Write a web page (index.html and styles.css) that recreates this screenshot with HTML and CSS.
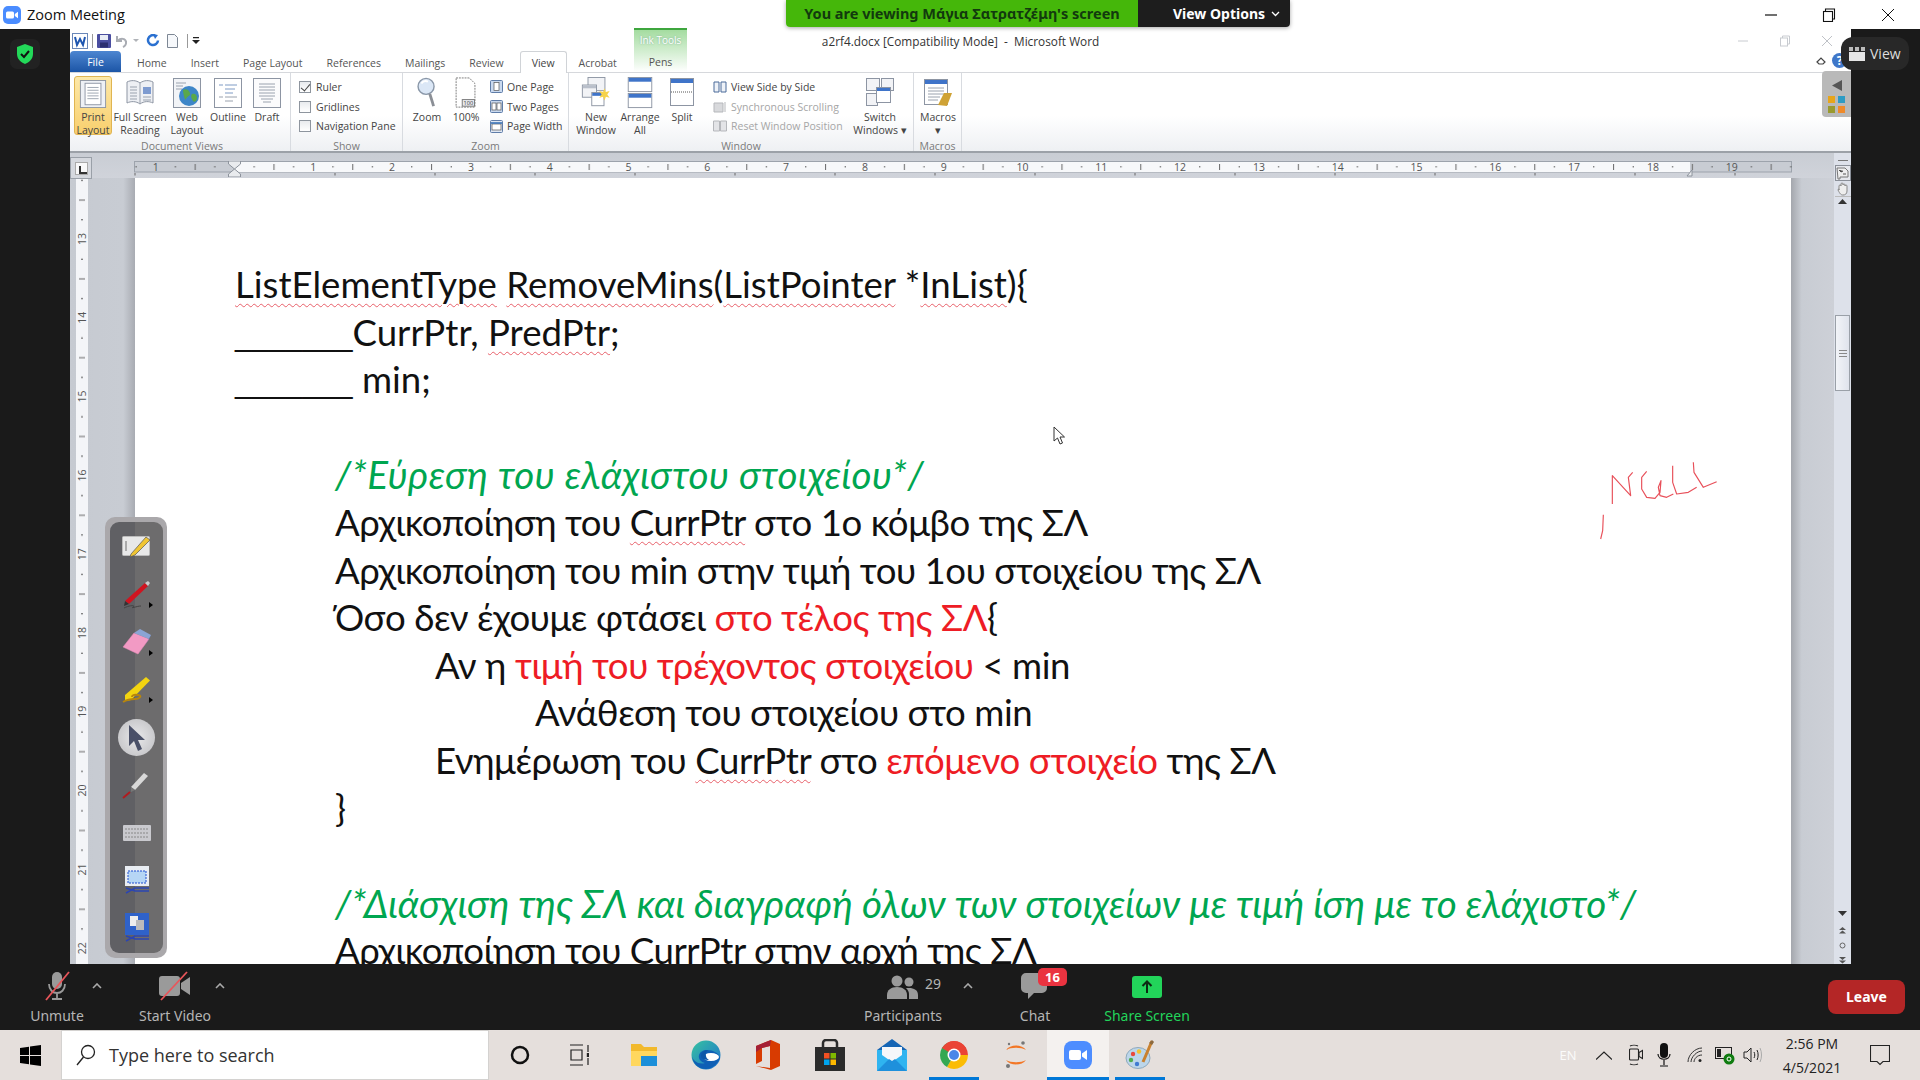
FILE: index.html
```html
<!DOCTYPE html>
<html lang="en">
<head>
<meta charset="utf-8">
<title>Zoom Meeting</title>
<link rel="stylesheet" href="styles.css">
</head>
<body>
<div class="screen">
  <header class="titlebar">
    <svg class="zlogo" viewBox="0 0 18 18"><rect width="18" height="18" rx="5" fill="#4a8cff"/><rect x="3" y="5.5" width="8" height="7" rx="1.5" fill="#fff"/><path d="M11.8 8l3.2-2.2v6.4L11.8 10z" fill="#fff"/></svg>
    <span class="app-title">Zoom Meeting</span>
    <div class="winctrls">
      <span class="winbtn"><svg width="14" height="14" viewBox="0 0 14 14"><path d="M1 7h12" stroke="#111" stroke-width="1.2"/></svg></span>
      <span class="winbtn"><svg width="14" height="14" viewBox="0 0 14 14" fill="none" stroke="#111" stroke-width="1.1"><rect x="1.5" y="3.5" width="9" height="10"/><path d="M3.5 3.5V1h9v10h-2"/></svg></span>
      <span class="winbtn"><svg width="14" height="14" viewBox="0 0 14 14"><path d="M1 1l12 12M13 1L1 13" stroke="#111" stroke-width="1"/></svg></span>
    </div>
  </header>

  <div class="main">
    <aside class="side-left">
      <div class="shield-box">
        <svg width="16" height="20" viewBox="0 0 16 20"><path d="M8 0l8 3v7c0 5-4 8.500-8 10-4-1.500-8-5-8-10V3z" fill="#23d959"/><path d="M4 10l3 3 5-6" fill="none" stroke="#111" stroke-width="2"/></svg>
      </div>
    </aside>

    <div class="word">
      <div class="w-top">
        <div class="qat">
          <svg class="q-w" width="16" height="16" viewBox="0 0 16 16"><rect x=".5" y=".5" width="15" height="15" fill="#fff" stroke="#6a87b8"/><path d="M3 4l2 8 3-6 3 6 2-8" fill="none" stroke="#1f56b0" stroke-width="2"/></svg>
          <i class="q-sep"></i>
          <svg width="14" height="14" viewBox="0 0 14 14"><rect width="14" height="14" rx="1" fill="#4a4ea0"/><rect x="3" y="1" width="8" height="5" fill="#e8ecf5"/><rect x="3" y="8.500" width="8" height="5" fill="#2c2f70"/></svg>
          <svg width="14" height="14" viewBox="0 0 14 14"><path d="M2 2v5h5M2.500 7c3-3 8-3 8.500 1 .3 2-1 4-3 5" fill="none" stroke="#a9acb3" stroke-width="2"/></svg>
          <svg width="6" height="4" viewBox="0 0 6 4"><path d="M0 0h6L3 3z" fill="#b0b3b8"/></svg>
          <svg class="q-redo" width="14" height="14" viewBox="0 0 14 14"><path d="M9 1.500a5 5 0 1 0 3 5" fill="none" stroke="#2a70d0" stroke-width="2.500"/><path d="M7 0l5 1-3 4z" fill="#2a70d0"/></svg>
          <svg class="q-new" width="11" height="14" viewBox="0 0 11 14"><path d="M.5.5h7l3 3v10H.5z" fill="#f6f8fb" stroke="#7d8794"/></svg>
          <i class="q-sep q-sep2"></i>
          <svg width="8" height="9" viewBox="0 0 8 9"><path d="M1 1h6v1.200H1zM0 4h8L4 8z" fill="#222"/></svg>
        </div>
        <div class="doc-title">a2rf4.docx [Compatibility Mode]&nbsp; -&nbsp; Microsoft Word</div>
        <div class="w-ctrls">
          <svg width="12" height="12" viewBox="0 0 12 12"><path d="M1 6h10" stroke="#c8cbd0"/></svg>
          <svg width="12" height="12" viewBox="0 0 12 12" fill="none" stroke="#c8cbd0"><rect x="1.500" y="3" width="7" height="8"/><path d="M3.500 3V1h7v8H8.500"/></svg>
          <svg width="12" height="12" viewBox="0 0 12 12"><path d="M1 1l10 10M11 1L1 11" stroke="#bfc2c7"/></svg>
        </div>
      </div>
      <nav class="tabs">
        <span class="tab-file">File</span>
        <span class="tab t-home">Home</span>
        <span class="tab">Insert</span>
        <span class="tab">Page Layout</span>
        <span class="tab">References</span>
        <span class="tab">Mailings</span>
        <span class="tab">Review</span>
        <span class="tab tab-on">View</span>
        <span class="tab t-acro">Acrobat</span>
        <span class="tab-ink"><b>Ink Tools</b><span>Pens</span></span>
        <span class="tab-right">
          <svg width="10" height="9" viewBox="0 0 10 9"><path d="M1 6l4-4 4 4-2 2H3z" fill="none" stroke="#444" stroke-width="1.200"/></svg>
          <svg width="15" height="15" viewBox="0 0 15 15"><circle cx="7.500" cy="7.500" r="7.500" fill="#3f77c9"/><text x="7.500" y="11.500" class="help-q">?</text></svg>
        </span>
      </nav>

      <section class="ribbon">
        <div class="group g-views">
          <div class="g-body">
            <div class="rb rb-print rb-on">
              <svg width="28" height="30" viewBox="0 0 28 30"><rect x=".5" y=".5" width="27" height="29" fill="#eef1f6" stroke="#8d95a3"/><rect x="5.500" y="3.500" width="17" height="23" fill="#fff" stroke="#8d95a3"/><path d="M8 8h12M8 11h12M8 14h12M8 17h12M8 20h12" stroke="#9aa2ae"/></svg>
              <span>Print<br>Layout</span>
            </div>
            <div class="rb rb-full">
              <svg width="28" height="30" viewBox="0 0 28 30"><path d="M1 4c4-2 9-2 13 1 4-3 9-3 13-1v21c-4-2-9-2-13 1-4-3-9-3-13-1z" fill="#eef0f4" stroke="#8d95a3"/><path d="M14 5v21M4 9h7M4 12h7M4 15h7M4 18h7M4 21h7" stroke="#9aa2ae"/><rect x="17" y="9" width="8" height="7" fill="#7e9bd0"/><path d="M17 19h8M17 22h8" stroke="#9aa2ae"/></svg>
              <span>Full Screen<br>Reading</span>
            </div>
            <div class="rb rb-web">
              <svg width="28" height="30" viewBox="0 0 28 30"><rect x=".5" y=".5" width="27" height="29" fill="#f2f4f7" stroke="#8d95a3"/><path d="M3 5h10M3 8h7M3 11h6" stroke="#9aa2ae"/><circle cx="16" cy="18" r="10" fill="#3d86c8"/><path d="M10 12c3-2 6 0 7 3s-3 3-4 6-3-6-3-9zM19 16c3-1 5 1 5 4s-3 5-4 3-3-5-1-7z" fill="#5aa84a"/></svg>
              <span>Web<br>Layout</span>
            </div>
            <div class="rb rb-outline">
              <svg width="28" height="30" viewBox="0 0 28 30"><rect x=".5" y=".5" width="27" height="29" fill="#fff" stroke="#8d95a3"/><path d="M5 7h4M11 7h12M11 11h10M11 15h8" stroke="#7f9bc5"/><path d="M5 19h4M11 19h12M11 23h8" stroke="#9aa2ae"/></svg>
              <span>Outline</span>
            </div>
            <div class="rb rb-draft">
              <svg width="28" height="30" viewBox="0 0 28 30"><rect x=".5" y=".5" width="27" height="29" fill="#fbfbfc" stroke="#8d95a3"/><path d="M6 6h16M6 9h16M6 12h16M6 15h16M6 18h16M8 21h12M10 24h8" stroke="#9aa2ae"/></svg>
              <span>Draft</span>
            </div>
          </div>
          <div class="g-label">Document Views</div>
        </div>

        <div class="group g-show">
          <div class="g-body">
            <div class="list l-show">
              <div class="li"><i class="chk chk-on"></i><span>Ruler</span></div>
              <div class="li"><i class="chk"></i><span>Gridlines</span></div>
              <div class="li"><i class="chk"></i><span>Navigation Pane</span></div>
            </div>
          </div>
          <div class="g-label">Show</div>
        </div>

        <div class="group g-zoom">
          <div class="g-body">
            <div class="rb rb-zoom">
              <svg width="22" height="34" viewBox="0 0 22 34"><circle cx="10" cy="10" r="8.500" fill="#dbe7f6" stroke="#8a97a8" stroke-width="1.500"/><path d="M5 7c2-3 5-3 7-2" stroke="#fff" stroke-width="2" fill="none"/><path d="M14 18l4 13" stroke="#8b8f96" stroke-width="3"/></svg>
              <span>Zoom</span>
            </div>
            <div class="rb rb-100">
              <svg width="24" height="34" viewBox="0 0 24 34"><path d="M1.500 1h14l6 6v25h-20z" fill="#fff" stroke="#777" stroke-dasharray="2 1"/><rect x="8" y="24" width="13" height="7" fill="#e8eaee" stroke="#777"/><text x="14.500" y="30" class="mini">100</text></svg>
              <span>100%</span>
            </div>
            <div class="list l-zoom">
              <div class="li"><svg class="lic" width="13" height="13" viewBox="0 0 13 13"><rect x=".5" y=".5" width="12" height="12" rx="1" fill="#c9d9ef" stroke="#5f7da8"/><rect x="4" y="2.500" width="5" height="8" fill="#fff" stroke="#555" stroke-width=".7"/></svg><span>One Page</span></div>
              <div class="li"><svg class="lic" width="13" height="13" viewBox="0 0 13 13"><rect x=".5" y=".5" width="12" height="12" rx="1" fill="#c9d9ef" stroke="#5f7da8"/><rect x="2" y="3" width="4" height="7" fill="#fff" stroke="#555" stroke-width=".7"/><rect x="7" y="3" width="4" height="7" fill="#fff" stroke="#555" stroke-width=".7"/></svg><span>Two Pages</span></div>
              <div class="li"><svg class="lic" width="13" height="13" viewBox="0 0 13 13"><rect x=".5" y=".5" width="12" height="12" rx="1" fill="#dfe7f3" stroke="#5f7da8"/><rect x="2" y="4" width="9" height="6" fill="#fff" stroke="#555" stroke-width=".7"/><path d="M1 3h11" stroke="#2f6db5" stroke-width="1.500"/></svg><span>Page Width</span></div>
            </div>
          </div>
          <div class="g-label">Zoom</div>
        </div>

        <div class="group g-window">
          <div class="g-body">
            <div class="rb rb-new">
              <svg width="30" height="34" viewBox="0 0 30 34"><rect x="6.500" y=".5" width="18" height="14" fill="#f2f3f6" stroke="#8d95a3"/><rect x=".5" y="8.500" width="15" height="13" fill="#f2f3f6" stroke="#8d95a3"/><rect x="1" y="9" width="14" height="3" fill="#b9bfca"/><rect x="10.500" y="16.500" width="13" height="14" fill="#fff" stroke="#8d95a3"/><rect x="11" y="17" width="12" height="3" fill="#3f74c9"/><path d="M24 12l1.500 4 4-1-2.500 3.500 2.500 3.500-4-1-1.500 4-1.500-4-4 1 2.500-3.500-2.500-3.500 4 1z" fill="#f6d34b"/></svg>
              <span>New<br>Window</span>
            </div>
            <div class="rb rb-arr">
              <svg width="26" height="34" viewBox="0 0 26 34"><rect x=".5" y=".5" width="25" height="15" fill="#fff" stroke="#8d95a3"/><rect x="1" y="1" width="24" height="4" fill="#3f74c9"/><rect x=".5" y="17.500" width="25" height="15" fill="#fff" stroke="#8d95a3"/><rect x="1" y="18" width="24" height="4" fill="#3f74c9"/></svg>
              <span>Arrange<br>All</span>
            </div>
            <div class="rb rb-split">
              <svg width="24" height="30" viewBox="0 0 24 30"><rect x=".5" y=".5" width="23" height="27" fill="#fff" stroke="#8d95a3"/><rect x="1" y="1" width="22" height="4" fill="#3f74c9"/><path d="M1 14h22" stroke="#555" stroke-dasharray="1 1"/></svg>
              <span>Split</span>
            </div>
            <div class="list l-win">
              <div class="li"><svg class="lic" width="14" height="12" viewBox="0 0 14 12"><path d="M1 1h5v10H1zM8 1h5v10H8z" fill="#eef2f8" stroke="#4a6a9a"/></svg><span>View Side by Side</span></div>
              <div class="li li-off"><svg class="lic" width="14" height="12" viewBox="0 0 14 12"><path d="M1 2h9v9H1z" fill="#d8d9dc" stroke="#b5b7bb"/><path d="M12 1v10" stroke="#b5b7bb"/></svg><span>Synchronous Scrolling</span></div>
              <div class="li li-off"><svg class="lic" width="14" height="12" viewBox="0 0 14 12"><path d="M.5 1h6v10h-6zM7.500 1h6v10h-6z" fill="#e3e4e7" stroke="#b5b7bb"/></svg><span>Reset Window Position</span></div>
            </div>
            <div class="rb rb-switch">
              <svg width="28" height="30" viewBox="0 0 28 30"><rect x=".5" y=".5" width="13" height="12" fill="#f2f3f6" stroke="#8d95a3"/><rect x="15.500" y=".5" width="12" height="12" fill="#f2f3f6" stroke="#8d95a3"/><rect x=".5" y="15.500" width="11" height="12" fill="#f2f3f6" stroke="#8d95a3"/><rect x="10.500" y="9.500" width="14" height="15" fill="#fff" stroke="#8d95a3"/><rect x="11" y="10" width="13" height="3" fill="#3f74c9"/></svg>
              <span>Switch<br>Windows ▾</span>
            </div>
          </div>
          <div class="g-label">Window</div>
        </div>

        <div class="group g-macros">
          <div class="g-body">
            <div class="rb rb-mac">
              <svg width="28" height="30" viewBox="0 0 28 30"><rect x=".5" y="1.500" width="23" height="25" fill="#fff" stroke="#8d95a3"/><rect x="1" y="2" width="22" height="4" fill="#3f74c9"/><path d="M4 10h16M4 13h16M4 16h16M4 19h12M4 22h10" stroke="#9aa2ae"/><path d="M14 27l6-12h8l-5 13z" fill="#cfa235"/></svg>
              <span>Macros<br>▾</span>
            </div>
          </div>
          <div class="g-label">Macros</div>
        </div>
      </section>

      <div class="w-body">
        <div class="w-left">
          <div class="ruler-row">
            <div class="tab-stop"><i></i></div>
            <svg class="h-ruler" width="1658" height="16" viewBox="0 0 1658 16">
              <defs>
                <pattern id="ht" width="78.800" height="16" x="100.500" patternUnits="userSpaceOnUse">
                  <rect x="19.200" y="5" width="1" height="1.500" fill="#555"/>
                  <rect x="39" y="3" width="1" height="6" fill="#666"/>
                  <rect x="58.600" y="5" width="1" height="1.500" fill="#555"/>
                </pattern>
                <pattern id="hs" width="100" height="16" x="200.500" patternUnits="userSpaceOnUse">
                  <rect x="0" y="12" width="1" height="2.500" fill="#666"/>
                </pattern>
              </defs>
              <rect x=".5" y=".5" width="1657" height="10.500" fill="#c8ccd3" stroke="#9da3ac"/>
              <rect x="100.500" y="1" width="1455.500" height="10" fill="#f7f8fa"/>
              <rect width="1658" height="11" fill="url(#ht)"/>
              <rect width="1658" height="16" fill="url(#hs)"/>
              <g class="rtext">
                <text x="21.700" y="9.500">1</text><text x="179.300" y="9.500">1</text><text x="258.100" y="9.500">2</text><text x="336.900" y="9.500">3</text><text x="415.700" y="9.500">4</text><text x="494.500" y="9.500">5</text><text x="573.300" y="9.500">6</text><text x="652.100" y="9.500">7</text><text x="730.900" y="9.500">8</text><text x="809.700" y="9.500">9</text><text x="888.500" y="9.500">10</text><text x="967.300" y="9.500">11</text><text x="1046.100" y="9.500">12</text><text x="1124.900" y="9.500">13</text><text x="1203.700" y="9.500">14</text><text x="1282.500" y="9.500">15</text><text x="1361.300" y="9.500">16</text><text x="1440.100" y="9.500">17</text><text x="1518.900" y="9.500">18</text><text x="1597.700" y="9.500">19</text>
              </g>
              <path d="M94.500 0h12v3l-6 5-6-5zM100.500 8l6 5v3h-12v-3z" fill="#e9ebee" stroke="#8d939c"/>
              <path d="M1553 15l5-6v6z" fill="#e9ebee" stroke="#8d939c"/>
            </svg>
          </div>
          <div class="work">
            <div class="v-col">
              <svg class="v-ruler" width="12" height="786" viewBox="0 0 12 786">
                <defs>
                  <pattern id="vt" width="12" height="78.800" y="61" patternUnits="userSpaceOnUse">
                    <rect x="5" y="19.700" width="2" height="1" fill="#555"/>
                    <rect x="3" y="39.400" width="6" height="1" fill="#666"/>
                    <rect x="5" y="59.100" width="2" height="1" fill="#555"/>
                  </pattern>
                </defs>
                <rect width="12" height="786" fill="#f4f5f8"/>
                <rect width="12" height="786" fill="url(#vt)"/>
                <g class="rtext">
                  <text transform="translate(9.500 61) rotate(-90)">13</text><text transform="translate(9.500 139.800) rotate(-90)">14</text><text transform="translate(9.500 218.600) rotate(-90)">15</text><text transform="translate(9.500 297.400) rotate(-90)">16</text><text transform="translate(9.500 376.200) rotate(-90)">17</text><text transform="translate(9.500 455) rotate(-90)">18</text><text transform="translate(9.500 533.800) rotate(-90)">19</text><text transform="translate(9.500 612.600) rotate(-90)">20</text><text transform="translate(9.500 691.400) rotate(-90)">21</text><text transform="translate(9.500 770.200) rotate(-90)">22</text>
                </g>
              </svg>
            </div>
            <article class="page">
              <p><span class="sq">ListElementType</span> <span class="sq">RemoveMins</span>(<span class="sq">ListPointer</span> *<span class="sq">InList</span>){</p>
              <p><span class="us">_______</span>CurrPtr, <span class="sq">PredPtr</span>;</p>
              <p><span class="us">_______</span> min;</p>
              <p class="blank">&nbsp;</p>
              <p class="i1 gr gr1">/*Εύρεση του ελάχιστου στοιχείου*/</p>
              <p class="i1 gk">Αρχικοποίηση του <span class="sq">CurrPtr</span> στο 1ο κόμβο της ΣΛ</p>
              <p class="i1 gk">Αρχικοποίηση του min στην τιμή του 1ου στοιχείου της ΣΛ</p>
              <p class="i1 gk">Όσο δεν έχουμε φτάσει <span class="rd">στο τέλος της ΣΛ</span>{</p>
              <p class="i2 gk">Αν η <span class="rd">τιμή του τρέχοντος στοιχείου</span> &lt; min</p>
              <p class="i3 gk">Ανάθεση του στοιχείου στο min</p>
              <p class="i2 gk">Ενημέρωση του <span class="sq">CurrPtr</span> στο <span class="rd">επόμενο στοιχείο</span> της ΣΛ</p>
              <p class="i1">}</p>
              <p class="blank">&nbsp;</p>
              <p class="i1 gr">/*Διάσχιση της ΣΛ και διαγραφή όλων των στοιχείων με τιμή ίση με το ελάχιστο*/</p>
              <p class="i1 gk">Αρχικοποίηση του CurrPtr στην αρχή της ΣΛ</p>
              <svg class="ink" width="200" height="120" viewBox="0 0 600 360" fill="none" stroke="#e8505a" stroke-width="3.500" stroke-linejoin="round">
                <path d="M157 195V110l55 60-7-55 13-15"/>
                <path d="M260 97l-15 18v35l15 25 25 3 15-18 3-35-8 20 5 25 20 5 20-10"/>
                <path d="M338 80v50l12 35 35-5 25-15"/>
                <path d="M400 70l2 30 28 45 40-17"/>
                <path d="M130 227l-2 48-6 25"/>
              </svg>
              <svg class="cursor" width="13" height="19" viewBox="0 0 13 19"><path d="M1 1v14l3.500-3 2.500 6 2.500-1-2.500-6h4.500z" fill="#fff" stroke="#333"/></svg>
            </article>
            <div class="gutter-r"></div>
          </div>
        </div>
        <div class="vscroll">
          <i class="vs-dash"></i>
          <span class="vs-btn vs-btn-on"><svg width="13" height="13" viewBox="0 0 13 13"><path d="M1 1h8l3 3v6H4v2H2z" fill="#eee" stroke="#777"/><path d="M3 3l2 2 2-1M7 7h3" stroke="#555"/></svg></span>
          <span class="vs-btn"><svg width="12" height="14" viewBox="0 0 12 14"><path d="M2 8V4a1 1 0 0 1 2 0V2a1 1 0 0 1 2 0v1a1 1 0 0 1 2 0v1a1 1 0 0 1 2 0v5c0 3-2 4-4 4s-3-1-5-5a1 1 0 0 1 1-1z" fill="#eee" stroke="#888"/></svg></span>
          <svg class="vs-up" width="9" height="5" viewBox="0 0 9 5"><path d="M4.500 0l4.500 5H0z" fill="#333"/></svg>
          <div class="vs-thumb"><i></i><i></i><i></i></div>
          <div class="vs-fill"></div>
          <svg class="vs-dn" width="9" height="5" viewBox="0 0 9 5"><path d="M4.500 5L9 0H0z" fill="#333"/></svg>
          <svg class="vs-mini" width="9" height="7" viewBox="0 0 9 7"><path d="M4.500 0L8 3H1zM4.500 3.500L8 6.500H1z" fill="#555"/></svg>
          <svg class="vs-mini" width="7" height="7" viewBox="0 0 7 7"><circle cx="3.500" cy="3.500" r="2.500" fill="none" stroke="#666"/></svg>
          <svg class="vs-mini vs-last" width="9" height="7" viewBox="0 0 9 7"><path d="M1 0h7L4.500 3zM1 3.500h7L4.500 6.500z" fill="#555"/></svg>
        </div>
      </div>
    </div>

    <aside class="side-right">
      <div class="view-btn">
        <svg width="16" height="14" viewBox="0 0 16 14"><rect y="5" width="16" height="9" fill="#e6e6e6"/><rect width="4" height="4" fill="#bbb"/><rect x="6" width="4" height="4" fill="#bbb"/><rect x="12" width="4" height="4" fill="#bbb"/></svg>
        <span>View</span>
      </div>
    </aside>
  </div>

  <div class="zoombar">
    <div class="zb-left">
      <div class="zi zi-mute">
        <svg width="30" height="30" viewBox="0 0 30 30"><rect x="10" y="1" width="10" height="17" rx="5" fill="#9a9a9a"/><path d="M7 13c0 12 16 12 16 0M15 22v5M10 28h10" fill="none" stroke="#9a9a9a" stroke-width="1.800"/><path d="M4 29L27 1" stroke="#e8555a" stroke-width="1.800"/></svg>
        <span>Unmute</span>
      </div>
      <svg class="caret c1" width="10" height="6" viewBox="0 0 10 6"><path d="M1 5l4-4 4 4" fill="none" stroke="#aaa" stroke-width="1.600"/></svg>
      <div class="zi zi-video">
        <svg width="32" height="30" viewBox="0 0 32 30"><rect y="5" width="21" height="20" rx="3" fill="#9a9a9a"/><path d="M22 12l9-6v18l-9-6z" fill="#9a9a9a"/><path d="M2 29L28 1" stroke="#e8555a" stroke-width="1.800"/></svg>
        <span>Start Video</span>
      </div>
      <svg class="caret" width="10" height="6" viewBox="0 0 10 6"><path d="M1 5l4-4 4 4" fill="none" stroke="#aaa" stroke-width="1.600"/></svg>
    </div>
    <div class="zb-center">
      <div class="zi zi-part">
        <div class="part-top">
          <svg width="31" height="24" viewBox="0 0 31 24"><circle cx="10" cy="6" r="5.500" fill="#9a9a9a"/><path d="M0 24v-4c0-5 4-8 10-8s10 3 10 8v4z" fill="#9a9a9a"/><circle cx="22" cy="7" r="4.500" fill="#9a9a9a"/><path d="M22 13c5 0 9 2 9 7v4h-9v-5c0-2-1-4-3-6z" fill="#9a9a9a"/></svg>
          <b>29</b>
        </div>
        <span>Participants</span>
      </div>
      <svg class="caret c3" width="10" height="6" viewBox="0 0 10 6"><path d="M1 5l4-4 4 4" fill="none" stroke="#aaa" stroke-width="1.600"/></svg>
      <div class="zi zi-chat">
        <svg width="26" height="26" viewBox="0 0 26 26"><path d="M5 0h16a5 5 0 0 1 5 5v10a5 5 0 0 1-5 5h-8l-6 6v-6H5a5 5 0 0 1-5-5V5a5 5 0 0 1 5-5z" fill="#9a9a9a"/></svg>
        <span>Chat</span>
        <em class="badge">16</em>
      </div>
      <div class="zi zi-share">
        <svg width="30" height="22" viewBox="0 0 30 22"><rect width="30" height="22" rx="3" fill="#22d45a"/><path d="M15 17V6M10.500 10L15 5.500 19.500 10" fill="none" stroke="#0c2a12" stroke-width="2"/></svg>
        <span>Share Screen</span>
      </div>
    </div>
    <div class="leave">Leave</div>
  </div>

  <footer class="taskbar">
    <div class="tb-start"><svg width="21" height="21" viewBox="0 0 21 21"><path d="M0 3l9-1.300V10H0zM10 1.500L21 0v10H10zM0 11h9v8.300L0 18zM10 11h11v10l-11-1.500z" fill="#000"/></svg></div>
    <div class="tb-search">
      <svg width="20" height="22" viewBox="0 0 20 22"><circle cx="12" cy="8" r="6.500" fill="none" stroke="#222" stroke-width="1.300"/><path d="M7.500 13L1 21" stroke="#222" stroke-width="1.300"/></svg>
      <span>Type here to search</span>
    </div>
    <div class="tb-i"><svg width="20" height="20" viewBox="0 0 20 20"><circle cx="10" cy="10" r="8" fill="none" stroke="#111" stroke-width="2.500"/></svg></div>
    <div class="tb-i tb-shift"><svg width="20" height="22" viewBox="0 0 20 22" fill="none" stroke="#222" stroke-width="1.200"><path d="M1 1h13M1 21h13M2 6h11v10H2zM19 1v7M19 14v7"/><path d="M19 9v4" stroke-width="2.400"/></svg></div>
    <div class="tb-i"><svg width="28" height="26" viewBox="0 0 28 26"><path d="M1 2h10l3 3h13v19H1z" fill="#f2b92c"/><path d="M1 9h26v15H1z" fill="#ffd75e"/><rect x="11" y="14" width="16" height="10" fill="#1c8fd9"/></svg></div>
    <div class="tb-i"><svg width="30" height="30" viewBox="0 0 30 30"><defs><linearGradient id="edge" x1="0" y1="0" x2="1" y2="1"><stop offset="0" stop-color="#36c3a0"/><stop offset="1" stop-color="#1e6fd0"/></linearGradient></defs><circle cx="15" cy="15" r="14.500" fill="url(#edge)"/><path d="M29 18c-2 6-8 11-14 11C7 29 1 23 1 15c0 6 7 10 13 8-4-1-7-4-6-8 1-3 4-5 8-5 6 0 12 3 13 8z" fill="#0f5fb5"/><ellipse cx="20" cy="17" rx="8" ry="4" fill="#fff"/><path d="M10 16c0-3 3-6 7-6-3 2-3 8 1 10-4 0-8-1-8-4z" fill="#0d57a8"/></svg></div>
    <div class="tb-i"><svg width="24" height="30" viewBox="0 0 24 30"><path d="M15 0l9 4v22l-9 4-15-4 14 2V6L6 8v13l-6 3V6z" fill="#d83b01"/><path d="M15 0L0 6v6l6-4 8-2z" fill="#a41f35"/></svg></div>
    <div class="tb-i"><svg width="30" height="32" viewBox="0 0 30 32"><path d="M0 8h30v24H0z" fill="#2b2b2b"/><path d="M8 10V4a3 3 0 0 1 3-3h8a3 3 0 0 1 3 3v6" fill="none" stroke="#2b2b2b" stroke-width="2.500"/><rect x="9" y="14" width="5.500" height="5.500" fill="#f25022"/><rect x="15.500" y="14" width="5.500" height="5.500" fill="#7fba00"/><rect x="9" y="20.500" width="5.500" height="5.500" fill="#00a4ef"/><rect x="15.500" y="20.500" width="5.500" height="5.500" fill="#ffb900"/></svg></div>
    <div class="tb-i"><svg width="30" height="32" viewBox="0 0 30 32"><path d="M15 0l15 11H0z" fill="#1565b5"/><path d="M0 11h30v21H0z" fill="#2fb4f0"/><path d="M5 8h20v8l-10 7-10-7z" fill="#f5f7fa"/><path d="M0 32l12-12 3 2 3-2 12 12z" fill="#1e90dc"/></svg></div>
    <div class="tb-i tb-act"><svg width="28" height="28" viewBox="0 0 28 28"><path d="M14 14L14 0A14 14 0 0 1 26.100 21z" fill="#ea4335" transform="rotate(-30 14 14)"/><path d="M14 14L26.100 7A14 14 0 0 1 14 28z" fill="#fbbc05" transform="rotate(30 14 14)"/><path d="M14 14L14 28A14 14 0 0 1 1.900 7z" fill="#34a853" transform="rotate(30 14 14)"/><path d="M14 14L1.900 7A14 14 0 0 1 26.100 7z" fill="#ea4335"/><circle cx="14" cy="14" r="6.500" fill="#fff"/><circle cx="14" cy="14" r="5" fill="#4a86e8"/></svg></div>
    <div class="tb-i"><svg width="24" height="30" viewBox="0 0 24 30"><path d="M2 10c4-6 16-6 20 0-5-3-15-3-20 0zM2 20c4 6 16 6 20 0-5 3-15 3-20 0z" fill="#f37726"/><circle cx="19" cy="3" r="1.800" fill="#767677"/><circle cx="4" cy="26" r="2" fill="#767677"/><circle cx="5" cy="4" r="1.200" fill="#767677"/></svg></div>
    <div class="tb-i tb-zoom"><svg width="28" height="28" viewBox="0 0 28 28"><rect width="28" height="28" rx="8" fill="#4d8dff"/><rect x="5" y="9" width="12" height="10" rx="2" fill="#fff"/><path d="M18 12.500l5-3.500v10l-5-3.500z" fill="#fff"/></svg></div>
    <div class="tb-i tb-paint"><svg width="30" height="30" viewBox="0 0 30 30"><ellipse cx="13" cy="18" rx="12" ry="10.500" fill="#bcd6ea" stroke="#8fa9bd"/><circle cx="8" cy="14" r="2.200" fill="#e84a3c"/><circle cx="14" cy="11.500" r="2.200" fill="#f5c32c"/><circle cx="6" cy="20" r="2.200" fill="#52ad4d"/><circle cx="12" cy="24" r="2.200" fill="#3f7ad1"/><path d="M27 1l-9 21" stroke="#c9812f" stroke-width="3"/><path d="M27 0l2 2-2 3-3-2z" fill="#8c6a3f"/></svg></div>

    <div class="tray">
      <span class="tr tr-en">EN</span>
      <span class="tr tr-chev"><svg width="16" height="9" viewBox="0 0 16 9"><path d="M0 8.500L8 1l8 7.500" fill="none" stroke="#222" stroke-width="1.200"/></svg></span>
      <span class="tr"><svg width="14" height="22" viewBox="0 0 14 22" fill="none" stroke="#222" stroke-width="1.100"><rect x=".5" y="5" width="9" height="11" rx="1"/><path d="M10 8.500l3.500-2v8l-3.500-2zM1 2c2-1 6-1 8 0M1 20c2 1 6 1 8 0"/></svg></span>
      <span class="tr"><svg width="14" height="24" viewBox="0 0 14 24"><rect x="3" width="8" height="15" rx="4" fill="#111"/><path d="M1 11c0 7 12 7 12 0M7 17v5M3 23h8" fill="none" stroke="#111" stroke-width="1.200"/></svg></span>
      <span class="tr tr-wifi"><svg width="16" height="16" viewBox="0 0 16 16" fill="none" stroke="#333" stroke-width="1"><path d="M1 15C1 8 8 1 15 1M4 15c0-5 6-11 11-11M7 15c0-3 3-7 8-7"/><circle cx="13" cy="13.500" r="1.500" fill="#222" stroke="none"/></svg></span>
      <span class="tr"><svg width="20" height="20" viewBox="0 0 20 20"><rect x=".5" y="2.500" width="16" height="11" fill="none" stroke="#222"/><rect x="2" y="4" width="4" height="8" fill="#222"/><circle cx="14" cy="14" r="5.500" fill="#107c10"/><circle cx="14" cy="14" r="2" fill="none" stroke="#fff"/></svg></span>
      <span class="tr"><svg width="20" height="18" viewBox="0 0 20 18" fill="none" stroke="#222" stroke-width="1"><path d="M1 6h3l4-4v14l-4-4H1zM11 6c1 2 1 4 0 6M14 4c1.500 3 1.500 7 0 10"/><path d="M17 2c2 4 2 10 0 14" stroke="#aaa"/></svg></span>
      <div class="clock"><span>2:56 PM</span><span>4/5/2021</span></div>
      <span class="tr tr-note"><svg width="20" height="21" viewBox="0 0 20 21"><path d="M.5.500h19v16h-6.500l-3 3-3-3h-6.500z" fill="none" stroke="#222" stroke-width="1.100"/></svg></span>
    </div>
  </footer>

  <div class="banner">
    <div class="ban-green">You are viewing Μάγια Σατρατζέμη's screen</div>
    <div class="ban-dark"><span>View Options</span><svg width="9" height="6" viewBox="0 0 9 6"><path d="M1 1l3.500 3.500L8 1" fill="none" stroke="#fff" stroke-width="1.300"/></svg></div>
  </div>

  <div class="side-panel">
    <svg width="10" height="11" viewBox="0 0 10 11"><path d="M0 5.500L10 0v11z" fill="#555"/></svg>
    <div class="sp-icons"><i class="s1"></i><i class="s2"></i><i class="s3"></i><i class="s4"></i></div>
  </div>

  <div class="palette">
    <div class="pal-inner">
      <svg width="30" height="24" viewBox="0 0 30 24"><rect x=".5" y=".5" width="27" height="19" rx="1" fill="#e8e8e8" stroke="#bbb"/><rect x="3" y="5" width="2" height="10" fill="#aaa"/><path d="M9 18L24 1l4 3-15 15-5 2z" fill="#f0c533" stroke="#555" stroke-width=".7"/></svg>
      <div class="pal-tool"><svg width="30" height="30" viewBox="0 0 30 30"><path d="M3 21L23 3l3 3L7 24z" fill="#cf1420"/><path d="M23 3l3-2 2 2-2 3z" fill="#c9c9c9"/><path d="M3 21l4 3-5 2z" fill="#333"/><path d="M2 28c6-3 12-3 9-1s4-1 8-1" stroke="#444" fill="none"/></svg><i class="pal-arrow"></i></div>
      <div class="pal-tool"><svg width="30" height="30" viewBox="0 0 30 30"><path d="M1 19L12 5l15 6-11 15z" fill="#f29ac4" stroke="#e88ab8" stroke-width=".5"/><path d="M12 5l6-4 11 6-2 4z" fill="#8aa4d4"/><path d="M27 11l2-4-5 9z" fill="#2b55c8"/></svg><i class="pal-arrow"></i></div>
      <div class="pal-tool"><svg width="30" height="30" viewBox="0 0 30 30"><path d="M3 20L24 2l4 3.500L9 25l-6 1z" fill="#f2d410"/><path d="M1 27c5-3 8-3 12-3s8-3 3-4-6 1-6 2" fill="none" stroke="#b8860b" stroke-width="2"/></svg><i class="pal-arrow"></i></div>
      <div class="pal-cursor"><svg width="17" height="26" viewBox="0 0 17 26"><path d="M1 0v21l5-5 4 10 4-2-4-9h7z" fill="#4a5068"/></svg></div>
      <svg width="30" height="30" viewBox="0 0 30 30"><path d="M9 17L22 3l4 3-13 14z" fill="#d8d8d8"/><path d="M9 17l4 3-4 2z" fill="#777"/><path d="M8 22L1 28" stroke="#b01c20" stroke-width="2"/></svg>
      <svg width="28" height="16" viewBox="0 0 28 16"><rect width="28" height="16" rx="1" fill="#c9c9ce"/><path d="M2 4h24M2 8h24M2 12h24" stroke="#888" stroke-dasharray="2 1"/></svg>
      <svg width="28" height="30" viewBox="0 0 28 30"><rect x="2" y="1" width="24" height="20" fill="#e9edf3"/><rect x="5" y="6" width="18" height="12" fill="#b6d6f5" stroke="#1f4fd1" stroke-dasharray="2 1"/><path d="M3 28l9-5 14 0M3 23l9 3h14" stroke="#2b45b3" fill="none" stroke-width="1.500"/></svg>
      <svg width="28" height="30" viewBox="0 0 28 30"><rect x="2" y="0" width="24" height="22" fill="#2f62c9"/><rect x="7" y="3" width="8" height="10" fill="#eee"/><rect x="13" y="7" width="8" height="10" fill="#bbb"/><path d="M3 28l9-5 14 0M3 23l9 3h14" stroke="#2b45b3" fill="none" stroke-width="1.500"/></svg>
    </div>
  </div>
</div>
</body>
</html>
```
FILE: styles.css
```css
* { box-sizing: border-box; }
html, body { margin: 0; padding: 0; width: 100%; height: 100%; overflow: hidden; }
body { font-family: "Open Sans", "Noto Sans", sans-serif; background: #1a1a1a; }
.screen { position: relative; width: 1920px; height: 1080px; display: flex; flex-direction: column; overflow: hidden; }

/* title bar */
.titlebar { height: 29px; flex: none; background: #fff; display: flex; align-items: center; padding-left: 3px; }
.zlogo { width: 18px; height: 18px; }
.app-title { margin-left: 6px; font-size: 14.500px; color: #111; }
.winctrls { margin-left: auto; display: flex; margin-right: 3px; }
.winbtn { width: 58.500px; display: flex; justify-content: center; }

.main { flex: 1; display: flex; min-height: 0; }
.side-left { width: 70px; background: #1a1a1a; padding: 10px 0 0 10px; }
.shield-box { width: 30px; height: 30px; border-radius: 7px; background: #222; display: flex; align-items: center; justify-content: center; }
.side-right { width: 69px; background: #1a1a1a; position: relative; }
.view-btn { position: absolute; left: -10px; top: 8px; width: 68px; height: 33px; border-radius: 12px; background: #282828; color: #ddd; font-size: 14px; display: flex; align-items: center; gap: 5px; padding-left: 8px; }

/* word */
.word { width: 1781px; display: flex; flex-direction: column; background: #fff; min-height: 0; }
.w-top { height: 23px; flex: none; display: grid; grid-template-columns: 1fr auto 1fr; align-items: center; }
.qat { display: flex; align-items: center; padding-left: 2px; gap: 4px; }
.q-sep { width: 1px; height: 14px; background: #999; }
.q-sep2 { margin-left: 5px; }
.q-redo { margin-left: 3px; }
.q-new { margin-left: 3px; }
.doc-title { font-size: 11.800px; color: #333; padding-top: 1px; }
.w-ctrls { display: flex; justify-content: flex-end; gap: 30px; padding-right: 18px; }

.tabs { height: 21px; flex: none; display: flex; align-items: flex-end; font-size: 10.500px; color: #555; border-bottom: 1px solid #d6d8dc; position: relative; }
.tab-file { width: 51px; height: 21px; background: linear-gradient(#4d86d1, #1c55a6); color: #fff; border-radius: 4px 4px 0 0; text-align: center; line-height: 22px; }
.tab { padding: 0 12px; line-height: 22px; height: 20px; }
.t-home { margin-left: 4px; }
.tab-on { margin-left: 4px; height: 22px; line-height: 23px; padding: 0 11px; color: #444; background: #fff; border: 1px solid #d0d3d7; border-bottom: 0; border-radius: 3px 3px 0 0; position: relative; top: 1px; margin-right: -2px; z-index: 1; }
.t-acro { margin-left: 2px; }
.tab-ink { position: absolute; left: 564px; bottom: 0; width: 53px; height: 44px; border-top: 2px solid #3ea63e; background: linear-gradient(#a4dca0, #fff); text-align: center; display: flex; flex-direction: column; justify-content: space-between; padding-top: 1px; }
.tab-ink b { font-weight: 400; font-size: 10px; color: #fff; text-shadow: 0 0 2px #7a9; line-height: 18px; }
.tab-ink span { line-height: 15px; padding-bottom: 2px; }
.tab-right { position: absolute; right: 4px; top: 1px; display: flex; gap: 6px; align-items: center; }
.help-q { font: 700 12px "Open Sans", sans-serif; fill: #fff; text-anchor: middle; }
.mini { font: 6px "Open Sans", sans-serif; fill: #333; text-anchor: middle; }

.ribbon { height: 80px; flex: none; display: flex; background: linear-gradient(#fff 55%, #eef0f3); border-bottom: 2px solid #9ca1a8; }
.group { display: flex; flex-direction: column; border-right: 1px solid #d8dbe0; flex: none; }
.g-views { width: 221px; padding-left: 4px; }
.g-show { width: 112px; }
.g-zoom { width: 166px; }
.g-window { width: 345px; }
.g-macros { width: 48px; }
.g-body { flex: 1; display: flex; min-height: 0; }
.g-label { height: 15px; flex: none; text-align: center; font-size: 10.500px; line-height: 20px; color: #7a7a7a; }
.rb { display: flex; flex-direction: column; align-items: center; flex: none; padding-top: 4px; font-size: 10.500px; line-height: 13px; color: #444; text-align: center; }
.rb svg { height: 32px; margin-bottom: 2px; flex: none; }
.rb span { white-space: nowrap; }
.rb-print { width: 38px; margin-top: 3px; padding-top: 3px; height: 59px; }
.rb-print svg { height: 28px; margin-bottom: 3px; }
.rb-on { background: linear-gradient(#fde8a8, #f8cf6d); border: 1px solid #e0b552; border-radius: 3px; }
.rb-full { width: 56px; }
.rb-web { width: 38px; }
.rb-outline { width: 44px; }
.rb-draft { width: 34px; }
.list { display: flex; flex-direction: column; padding-top: 4px; font-size: 10.500px; color: #444; }
.li { height: 20px; display: flex; align-items: center; white-space: nowrap; }
.li-off { color: #a6a6a6; }
.l-show { padding-left: 8px; }
.chk { width: 12px; height: 12px; border: 1px solid #8e959e; background: linear-gradient(#e9ebee, #fff); margin-right: 5px; position: relative; }
.chk-on::after { content: ""; position: absolute; left: 3px; top: 0; width: 4px; height: 8px; border: solid #444; border-width: 0 1.500px 1.500px 0; transform: rotate(40deg); }
.lic { margin-right: 4px; flex: none; }
.rb-zoom { width: 46px; margin-left: 1px; }
.rb-100 { width: 32px; }
.l-zoom { padding-left: 8px; }
.rb-new { width: 54px; }
.rb-arr { width: 34px; }
.rb-split { width: 50px; }
.l-win { width: 142px; margin-left: 6px; }
.rb-switch { width: 50px; }
.rb-mac { width: 48px; }

.w-body { flex: 1; display: flex; min-height: 0; background: #ccd0d7; }
.w-left { flex: 1; display: flex; flex-direction: column; min-width: 0; }
.ruler-row { height: 25px; flex: none; display: flex; background: linear-gradient(#c9cdd4, #d0d3da); padding-top: 8px; }
.tab-stop { width: 22px; height: 22px; margin-top: -4px; border: 1px solid #9aa0a8; background: #d5d8de; display: flex; align-items: center; justify-content: center; position: relative; z-index: 2; }
.tab-stop i { width: 13px; height: 13px; background: #f8f8f9; border: 1px solid #aaa; display: block; position: relative; }
.tab-stop i::after { content: ""; position: absolute; left: 3px; top: 3px; width: 6px; height: 6px; border: solid #333; border-width: 0 0 2px 2px; }
.h-ruler { margin-left: 42px; flex: none; }
.rtext text { font: 10.500px "Open Sans", sans-serif; fill: #555; text-anchor: middle; }
.work { flex: 1; display: flex; min-height: 0; }
.v-col { width: 65px; flex: none; padding-left: 6px; background: linear-gradient(90deg, #c6cad1 0, #c8ccd3 82%, #a8abb2 100%); }
.v-ruler { display: block; }
.page { position: relative; width: 1656px; flex: none; background: #fff; padding: 83px 0 0 100px; overflow: hidden; font-family: Lato, "Open Sans", sans-serif; font-size: 36.600px; line-height: 47.600px; color: #111; white-space: nowrap; }
.page p { margin: 0; height: 47.600px; }
.i1 { padding-left: 100px; }
.i2 { padding-left: 200px; }
.i3 { padding-left: 300px; }
.gk { letter-spacing: -.45px; }
.us { font-family: "Liberation Sans", sans-serif; font-size: 30.200px; }
.gr { color: #00a650; font-style: italic; font-size: 38.600px; }
.gr1 { letter-spacing: .5px; }
.rd { color: #ee1c25; }
.sq { text-decoration: underline wavy #e8606a 1px; text-underline-offset: 5px; }
.ink { position: absolute; left: 1425px; top: 261px; }
.cursor { position: absolute; left: 918px; top: 248px; }
.gutter-r { flex: 1; background: linear-gradient(90deg, #a4a7ad, #c8ccd3 25%, #cdd0d7); }

.vscroll { width: 17px; flex: none; background: #dde1ea; display: flex; flex-direction: column; align-items: center; padding-top: 7px; }
.vs-dash { width: 10px; height: 1px; background: #777; margin-bottom: 4px; }
.vs-btn { width: 16px; height: 16px; display: flex; align-items: center; justify-content: center; border-bottom: 1px solid #bbb; }
.vs-btn-on { border: 1px solid #8a8f98; background: #e6e8ed; }
.vs-up { margin-top: 2px; }
.vs-thumb { width: 15px; height: 76px; margin-top: 111px; border: 1px solid #9aa0a8; background: linear-gradient(90deg, #f2f4f8, #dfe3ec); display: flex; flex-direction: column; align-items: center; justify-content: center; gap: 2px; flex: none; }
.vs-thumb i { width: 8px; height: 1px; background: #888; }
.vs-fill { flex: 1; }
.vs-dn { margin-bottom: 11px; }
.vs-mini { margin-bottom: 8px; }
.vs-last { margin-bottom: 0; }

/* zoom toolbar */
.zoombar { height: 66px; flex: none; background: #1a1a1a; display: flex; position: relative; font-family: "Noto Sans", "Open Sans", sans-serif; color: #b5b5b5; font-size: 14px; }
.zb-left { display: flex; padding-left: 20px; width: 863px; flex: none; }
.zi { display: flex; flex-direction: column; align-items: center; position: relative; flex: none; padding-top: 7px; white-space: nowrap; }
.zi svg { height: 30px; }
.zi span { line-height: 20px; margin-top: 5px; }
.zi-mute { width: 74px; }
.caret { margin-top: 19px; flex: none; width: 10px; }
.c1 { margin-left: -2px; }
.zi-video { width: 80px; margin-left: 33px; }
.zb-center { display: flex; flex: none; }
.zi-part { width: 80px; }
.part-top { display: flex; height: 30px; align-items: flex-start; gap: 7px; margin-left: 22px; }
.part-top svg { height: 24px; margin-top: 4px; }
.part-top b { font-weight: 400; font-size: 14px; line-height: 26px; }
.c3 { margin-left: 20px; }
.zi-chat { width: 40px; margin-left: 42px; }
.zi-chat svg { width: 26px; height: 26px; margin: 2px 0 2px -2px; }
.badge { position: absolute; left: 23px; top: 4px; width: 29px; height: 18px; border-radius: 5px; background: #ea3340; color: #fff; font: 700 13px/18px "Open Sans", sans-serif; text-align: center; }
.zi-share { width: 92px; margin-left: 46px; color: #22d45a; }
.zi-share svg { height: 22px; margin: 5px 0 3px; }
.leave { position: absolute; left: 1828px; top: 16px; width: 77px; height: 34px; border-radius: 8px; background: #b42626; color: #fff; font-weight: 700; font-size: 14px; line-height: 33px; text-align: center; }

/* taskbar */
.taskbar { height: 50px; flex: none; background: #e5dfdc; display: flex; align-items: stretch; }
.tb-start { width: 61px; display: flex; align-items: center; justify-content: center; }
.tb-search { width: 428px; background: #fff; border: 1px solid #d4d2d0; display: flex; align-items: center; padding-left: 14px; gap: 13px; font-size: 18px; color: #333; }
.tb-i { width: 62px; display: flex; align-items: center; justify-content: center; position: relative; }
.tb-shift svg { margin-left: -6px; }
.tb-act::after, .tb-paint::after { content: ""; position: absolute; left: 6px; right: 6px; bottom: 0; height: 3px; background: #0078d7; }
.tb-zoom { background: #f4f1ef; }
.tb-zoom::after { content: ""; position: absolute; left: 0; right: 0; bottom: 0; height: 3px; background: #0078d7; }
.tray { margin-left: auto; display: flex; align-items: center; padding-right: 17px; }
.tr { width: 28px; height: 50px; display: flex; align-items: center; justify-content: center; flex: none; }
.tr-en { width: 36px; color: #fbfbfb; font-size: 13px; }
.tr-chev { width: 36px; }
.tr-wifi { width: 33px; }
.clock { width: 90px; display: flex; flex-direction: column; align-items: center; font-size: 14px; line-height: 24px; color: #222; padding-top: 1px; }
.tr-note { width: 46px; }

/* overlays */
.banner { position: absolute; left: 786px; top: 0; height: 27px; display: flex; border-radius: 0 0 4px 4px; overflow: hidden; box-shadow: 0 1px 4px rgba(0,0,0,.35); font-family: "Noto Sans", "Open Sans", sans-serif; font-weight: 700; font-size: 14.500px; line-height: 27px; }
.ban-green { width: 352px; background: #45b70a; color: #123a0e; text-align: center; }
.ban-dark { width: 152px; background: #1d1d1d; color: #fff; font-size: 14px; padding-left: 35px; display: flex; align-items: center; gap: 6px; }
.side-panel { position: absolute; left: 1822px; top: 71px; width: 29px; height: 46px; background: #b9b9b9; border-radius: 4px 0 0 4px; display: flex; flex-direction: column; align-items: center; padding-top: 9px; gap: 5px; }
.sp-icons { display: grid; grid-template-columns: 7px 7px; gap: 3px; }
.sp-icons i { height: 7px; display: block; }
.s1 { background: #e7a51b; }
.s2 { background: #2d9bc4; }
.s3 { background: #9a9a2e; }
.s4 { background: #ef8a2a; }
.palette { position: absolute; left: 105px; top: 517px; width: 62px; height: 441px; border-radius: 10px; background: #aaa8ab; padding: 5px; }
.pal-inner { width: 53px; height: 431px; border-radius: 9px; background: linear-gradient(90deg, #606064 0, #606064 47%, #6d6c6d 47%); display: grid; justify-items: center; align-items: center; grid-auto-rows: 47.500px; padding-top: 2px; }
.pal-tool { position: relative; height: 30px; }
.pal-arrow { position: absolute; left: 27px; top: 22px; width: 0; height: 0; border: 3px solid transparent; border-left: 4px solid #000; }
.pal-cursor { width: 37px; height: 37px; border-radius: 50%; background: radial-gradient(#e8e8ea, #bdbdc0); display: flex; align-items: center; justify-content: center; }
```
